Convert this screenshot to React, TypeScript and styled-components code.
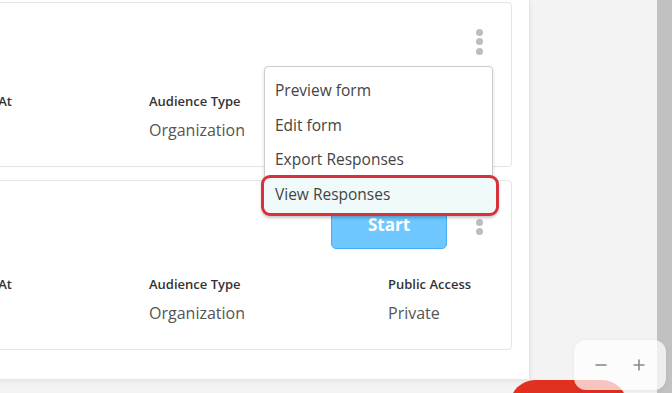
import React from "react";
import styled, { createGlobalStyle } from "styled-components";

const FONT = `"Open Sans", Lato, "Noto Sans", Arial, sans-serif`;

const GlobalStyle = createGlobalStyle`
  html, body { margin: 0; padding: 0; }
  body {
    width: 672px;
    height: 393px;
    overflow: hidden;
    background: #f3f3f3;
    font-family: ${FONT};
  }
`;

const Page = styled.div`
  position: relative;
  display: flex;
  width: 672px;
  height: 393px;
  overflow: hidden;
  background: #f3f3f3;
`;

const Main = styled.div`
  flex: 1;
  display: flex;
  align-items: flex-start;
  overflow: hidden;
  min-width: 0;
`;

const Scrollbar = styled.div`
  flex: none;
  width: 15px;
  background: #c1c1c1;
`;

const Panel = styled.section`
  flex: none;
  box-sizing: border-box;
  width: 730px;
  height: 379px;
  margin-left: -200px;
  padding: 2px 17px 0 18px;
  background: #fff;
  border-right: 1px solid #e4e4e4;
  box-shadow: 0 2px 6px rgba(0, 0, 0, 0.07);
  display: flex;
  flex-direction: column;
  gap: 13px;
`;

const Card = styled.article`
  box-sizing: border-box;
  border: 1px solid #e4e4e4;
  border-radius: 4px;
  padding: 18px 20px 25px 20px;
  display: flex;
  flex-direction: column;
  gap: 26px;
`;

const TopRow = styled.div<{ $tall?: boolean }>`
  position: relative;
  display: flex;
  align-items: center;
  justify-content: flex-end;
  gap: 20px;
  height: ${(p) => (p.$tall ? "50px" : "45px")};
`;

const StartButton = styled.button`
  box-sizing: border-box;
  width: 116px;
  height: 50px;
  margin-left: -1px;
  border: 1px solid #45aef5;
  border-radius: 5px;
  background: #6ec7ff;
  color: #fff;
  font-family: ${FONT};
  font-weight: 700;
  font-size: 17px;
  cursor: pointer;
`;

const Kebab = styled.button`
  width: 24px;
  height: 30px;
  margin-top: -4px;
  padding: 0;
  border: none;
  background: transparent;
  display: flex;
  flex-direction: column;
  align-items: center;
  justify-content: center;
  gap: 2.5px;
`;

const Dot = styled.span`
  width: 7px;
  height: 7px;
  border-radius: 50%;
  background: #b8bec2;
`;

const InfoGrid = styled.div`
  display: grid;
  grid-template-columns: 94px 216px 239px 1fr;
`;

const Field = styled.div`
  display: flex;
  flex-direction: column;
  gap: 9px;
  white-space: nowrap;
`;

const Label = styled.div`
  font-size: 13px;
  line-height: 18px;
  font-weight: 600;
  color: #333;
`;

const Value = styled.div`
  font-size: 16px;
  line-height: 22px;
  color: #555;
`;

const Menu = styled.ul`
  position: absolute;
  top: 100%;
  right: -2px;
  z-index: 5;
  box-sizing: border-box;
  width: 229px;
  height: 149px;
  margin: 0;
  padding: 6px 0 5px;
  list-style: none;
  background: #fff;
  border: 1px solid #c9cdd1;
  border-radius: 4px;
  box-shadow: 0 2px 4px rgba(0, 0, 0, 0.12);
`;

const MenuItem = styled.li<{ $marked?: boolean }>`
  position: relative;
  height: 34.5px;
  display: flex;
  align-items: center;
  padding-left: 10px;
  font-size: 15.5px;
  color: #444;
  white-space: nowrap;

  &::before {
    content: "";
    display: ${(p) => (p.$marked ? "block" : "none")};
    position: absolute;
    top: -2px;
    bottom: -5px;
    left: -4px;
    right: -7px;
    box-sizing: border-box;
    border: 3px solid #d8313a;
    border-radius: 9px;
    background: #f1fafa;
    box-shadow: 0 2px 3px rgba(0, 0, 0, 0.15);
  }
`;

const ItemText = styled.span`
  position: relative;
`;

const ZoomBox = styled.div`
  position: absolute;
  left: 574px;
  top: 340px;
  z-index: 10;
  width: 92px;
  height: 50px;
  box-sizing: border-box;
  border-radius: 12px;
  background: rgba(255, 255, 255, 0.72);
  box-shadow: 0 1px 4px rgba(0, 0, 0, 0.06);
  display: flex;
  align-items: center;
  justify-content: space-around;
  padding: 0 8px;
`;

const ZoomBtn = styled.button`
  border: none;
  background: transparent;
  padding: 0;
  width: 20px;
  height: 20px;
  display: flex;
  align-items: center;
  justify-content: center;
`;

const Fab = styled.div`
  position: absolute;
  left: 510px;
  top: 380px;
  z-index: 8;
  width: 117px;
  height: 50px;
  border-radius: 25px;
  background: #e2301f;
`;

const fields = (pub: string) => [
  { label: "Form Name", value: "" },
  { label: "Published At", value: "–" },
  { label: "Audience Type", value: "Organization" },
  { label: "Public Access", value: pub },
];

const Info = ({ pub }: { pub: string }) => (
  <InfoGrid>
    {fields(pub).map((f) => (
      <Field key={f.label}>
        <Label>{f.label}</Label>
        <Value>{f.value || "\u00a0"}</Value>
      </Field>
    ))}
  </InfoGrid>
);

const KebabIcon = () => (
  <Kebab aria-label="More">
    <Dot />
    <Dot />
    <Dot />
  </Kebab>
);

export default function App() {
  return (
    <>
      <GlobalStyle />
      <Page>
        <Main>
          <Panel>
            <Card>
              <TopRow>
                <KebabIcon />
                <Menu>
                  <MenuItem>
                    <ItemText>Preview form</ItemText>
                  </MenuItem>
                  <MenuItem>
                    <ItemText>Edit form</ItemText>
                  </MenuItem>
                  <MenuItem>
                    <ItemText>Export Responses</ItemText>
                  </MenuItem>
                  <MenuItem $marked>
                    <ItemText>View Responses</ItemText>
                  </MenuItem>
                </Menu>
              </TopRow>
              <Info pub="Private" />
            </Card>
            <Card>
              <TopRow $tall>
                <StartButton>Start</StartButton>
                <KebabIcon />
              </TopRow>
              <Info pub="Private" />
            </Card>
          </Panel>
        </Main>
        <Scrollbar />
        <Fab />
        <ZoomBox>
          <ZoomBtn aria-label="Zoom out">
            <svg width="14" height="14" viewBox="0 0 14 14">
              <path d="M1.5 7h11" stroke="#8a8a8a" strokeWidth="1.6" />
            </svg>
          </ZoomBtn>
          <ZoomBtn aria-label="Zoom in">
            <svg width="14" height="14" viewBox="0 0 14 14">
              <path d="M1.5 7h11M7 1.5v11" stroke="#8a8a8a" strokeWidth="1.6" />
            </svg>
          </ZoomBtn>
        </ZoomBox>
      </Page>
    </>
  );
}
